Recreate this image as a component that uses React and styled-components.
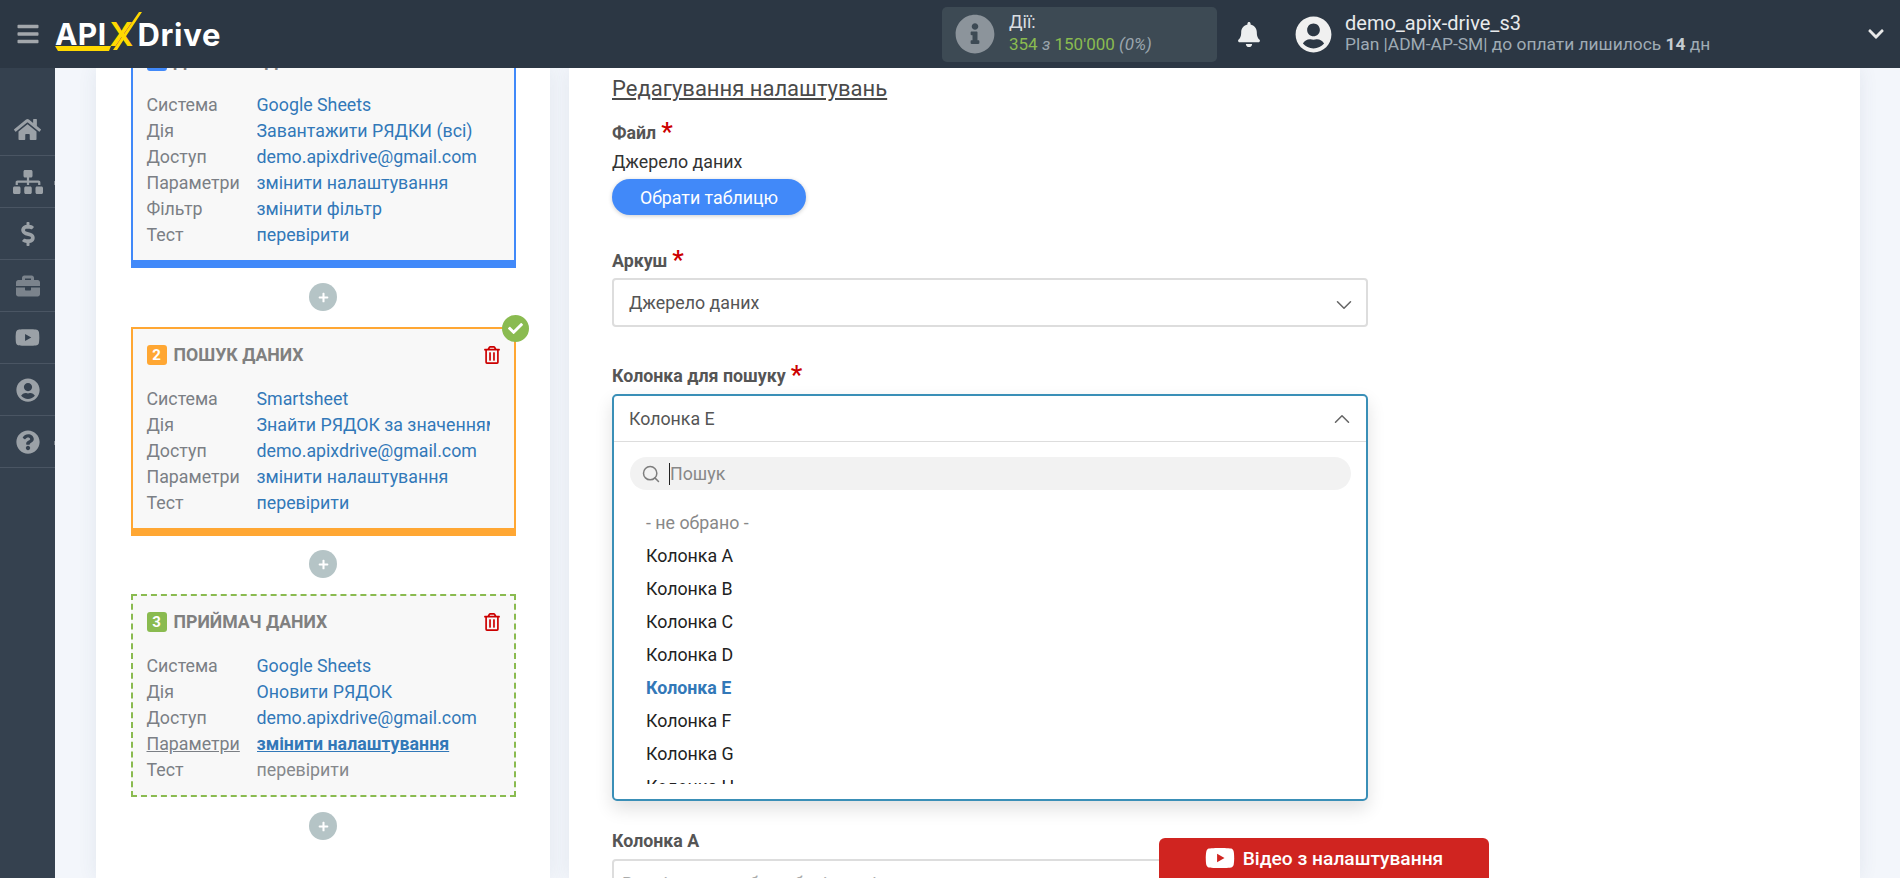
import React from "react";
import styled, { createGlobalStyle } from "styled-components";
import { FaHome, FaSitemap, FaDollarSign, FaBriefcase, FaYoutube, FaUserCircle, FaQuestionCircle, FaInfoCircle, FaBell, FaChevronDown, FaRegTrashAlt, FaCheck, FaPlus, FaBars } from "react-icons/fa";
import { ChevronDown, ChevronUp, Search } from "lucide-react";

const Global = createGlobalStyle`
  html, body { margin: 0; padding: 0; height: 100%; overflow: hidden; }
  body { font-family: Roboto, "Liberation Sans", sans-serif; font-size: 17.8px; color: #333; }
  * { box-sizing: border-box; }
`;

const Page = styled.div`position: relative; height: 100vh; display: flex; flex-direction: column; overflow: hidden;`;
const Header = styled.header`height: 68px; flex: none; background: #2c3744; display: flex; align-items: center;`;
const Burger = styled.div`width: 55px; display: flex; justify-content: center; color: #a3a7ac; font-size: 24px; svg { display: block; }`;
const Logo = styled.div`position: relative; display: flex; align-items: center; width: 200px; height: 68px; font-family: Inter, sans-serif; font-weight: 700; color: #fff; font-size: 30px; letter-spacing: 0.4px; line-height: 1;`;
const LogoX = styled.span`color: #ffd800; font-size: 33px; font-weight: 600; margin: 0 0 0 3px; width: 28px;`;
const LogoDrive = styled.span`font-size: 31px; letter-spacing: 0.7px;`;
const LogoMark = styled.svg`position: absolute; left: 0; top: 0; width: 170px; height: 68px; overflow: visible;`;
const Stats = styled.div`margin-left: 687px; width: 275px; height: 55px; background: #3d4a54; border-radius: 5px; display: flex; align-items: center; padding-left: 13px;`;
const StatIcon = styled.div`color: #8c949b; font-size: 40px; display: flex; svg { display: block; }`;
const StatText = styled.div`margin-left: 14px; font-size: 17px; line-height: 22px; margin-top: -2px;`;
const StatTitle = styled.div`color: #d9dde0; font-size: 18px;`;
const StatLine = styled.div`color: #8abb50; i { color: #9aa5ad; } span { color: #9aa5ad; font-style: italic; }`;
const Bell = styled.div`margin-left: 20px; width: 24px; color: #eceeef; font-size: 25px; display: flex; svg { display: block; }`;
const Avatar = styled.div`margin-left: 34px; color: #f0f0f0; font-size: 37px; display: flex; svg { display: block; }`;
const UserBlock = styled.div`margin-left: 13px; line-height: 21px;`;
const UserName = styled.div`color: #e8eaec; font-size: 20px;`;
const UserPlan = styled.div`color: #9fabb4; font-size: 17.4px; b { color: #c6ccd1; }`;
const Caret = styled.div`margin-left: auto; margin-right: 15px; color: #e8e8e8; font-size: 18px; display: flex;`;

const Body = styled.div`flex: 1; min-height: 0; display: flex; overflow: hidden;`;
const Sidebar = styled.nav`width: 55px; flex: none; background: #35414f; padding-top: 36px; position: relative;`;
const NavItem = styled.div`height: 52px; border-bottom: 1px solid #4a5563; display: flex; align-items: center; justify-content: center; color: ${p => p.$dim ? "#7b838c" : "#9ba1a7"}; font-size: ${p => p.$size || 26}px; position: relative;
  ${p => p.$tick && `&::after { content: ""; position: absolute; right: 0; top: 25px; width: 1px; height: 4px; background: #7b838c; }`}
`;
const Main = styled.main`flex: 1; background: #f3f6fb; display: flex; gap: 19px; padding-left: 41px; overflow: hidden;`;
const LeftPanel = styled.section`width: 454px; flex: none; background: #fff; box-shadow: 0 0 18px rgba(60,80,110,.09); display: flex; flex-direction: column; align-items: center;`;
const ScrolledTop = styled.div`margin-top: -35px; display: flex; flex-direction: column; align-items: center;`;
const Card = styled.div`position: relative; width: 385px; background: #f8f8f8; border: 2px ${p => p.$dashed ? "dashed" : "solid"} ${p => p.$color}; border-bottom-width: ${p => p.$dashed ? 2 : 8}px; padding: 16px 14px 12px;`;
const CardHead = styled.div`display: flex; align-items: center; height: 20px; margin-bottom: 21px;`;
const Badge = styled.span`width: 20px; height: 20px; border-radius: 3px; background: ${p => p.$color}; color: #fff; font-weight: 700; font-size: 15px; display: flex; align-items: center; justify-content: center;`;
const CardTitle = styled.span`margin-left: 7px; font-weight: 700; color: #808080; font-size: 17.7px; white-space: nowrap;`;
const Trash = styled.span`margin-left: auto; margin-right: -1px; color: #cc0000; font-size: 18px; display: flex;`;
const Row = styled.div`display: flex; height: 26px; line-height: 26px;`;
const RowLabel = styled.span`width: 110px; flex: none; color: #7b7f85; text-decoration: ${p => p.$active ? "underline" : "none"};`;
const RowValue = styled.span`width: 233px; overflow: hidden; white-space: nowrap; color: ${p => p.$muted ? "#85888c" : "#3278b8"}; font-weight: ${p => p.$active ? 700 : 400}; text-decoration: ${p => p.$active ? "underline" : "none"};`;
const Check = styled.span`position: absolute; right: -15px; top: -14px; width: 27px; height: 27px; border-radius: 50%; background: #8abb50; color: #fff; display: flex; align-items: center; justify-content: center; font-size: 15px;`;
const AddBtn = styled.div`width: 28px; height: 28px; border-radius: 50%; background: #b5c4c6; color: #fff; font-size: 11px; display: flex; align-items: center; justify-content: center; margin: ${p => p.$top || 14}px 0 16px;`;

const RightPanel = styled.section`width: 1291px; flex: none; background: #fff; box-shadow: 0 0 18px rgba(60,80,110,.09); padding: 9px 0 0 43px;`;
const Heading = styled.h2`margin: 0; font-size: 22px; line-height: 24px; font-weight: 400; color: #4a4a4a; text-decoration: underline;`;
const Field = styled.div`margin-top: ${p => p.$top}px;`;
const Label = styled.div`height: 22px; line-height: 22px; font-weight: 700; color: #555; display: flex;`;
const Star = styled.span`color: #cc0000; font-size: 26px; line-height: 20px; margin-left: 5px; font-weight: 500;`;
const Plain = styled.div`height: 22px; line-height: 22px; margin-top: 7px; color: #333;`;
const Btn = styled.div`width: 194px; height: 36px; margin-top: 6px; border-radius: 18px; background: #4189f9; color: #fff; display: flex; align-items: center; justify-content: center; box-shadow: 0 1px 4px rgba(0,0,0,.2);`;
const Select = styled.div`width: 756px; height: 49px; margin-top: 6px; border: 2px solid #ddd; border-radius: 4px; display: flex; align-items: center; justify-content: space-between; padding: 0 9px 0 15px; color: #555; svg { color: #666; margin-top: 4px; }`;
const Dropdown = styled.div`width: 756px; height: 407px; margin-top: 7px; border: 2px solid #3a8fb7; border-radius: 5px; box-shadow: 0 8px 18px rgba(0,0,0,.12); background: #fff;`;
const DropHead = styled.div`height: 46px; border-bottom: 1px solid #ddd; display: flex; align-items: center; justify-content: space-between; padding: 0 11px 0 15px; color: #555; svg { color: #666; }`;
const SearchBox = styled.div`height: 33px; margin: 15px 15px 16px 16px; background: #f2f2f2; border-radius: 17px; display: flex; align-items: center; padding-left: 11px; color: #888; svg { color: #7d7d7d; }`;
const TextCaret = styled.span`width: 1px; height: 22px; background: #222; margin: 0 0 0 8px;`;
const List = styled.div`height: 278px; margin-right: 1px; overflow-y: scroll; padding-left: 32px;
  &::-webkit-scrollbar { width: 11px; }
  &::-webkit-scrollbar-track { background: #f6f6f6; }
  &::-webkit-scrollbar-thumb { background: #c9c9c9; border-radius: 5px; }
`;
const Item = styled.div`height: 33px; line-height: 33px; color: ${p => p.$sel ? "#3278b8" : p.$none ? "#888" : "#222"}; font-weight: ${p => p.$sel ? 700 : 400};`;
const TextInput = styled.div`width: 756px; height: 49px; margin-top: 7px; border: 2px solid #ddd; border-radius: 4px; padding-left: 8px; display: flex; align-items: center; color: #aaa;`;
const VideoBtn = styled.div`position: absolute; left: 1159px; bottom: 0; width: 330px; height: 40px; background: #d02420; border-radius: 6px 6px 0 0; color: #fff; font-weight: 500; font-size: 19.2px; display: flex; align-items: center; justify-content: center; gap: 8px; svg { font-size: 30px; }`;

const rows = {
  a: [["Система","Google Sheets"],["Дія","Завантажити РЯДКИ (всі)"],["Доступ","demo.apixdrive@gmail.com"],["Параметри","змінити налаштування"],["Фільтр","змінити фільтр"],["Тест","перевірити"]],
  b: [["Система","Smartsheet"],["Дія","Знайти РЯДОК за значенням"],["Доступ","demo.apixdrive@gmail.com"],["Параметри","змінити налаштування"],["Тест","перевірити"]],
  c: [["Система","Google Sheets"],["Дія","Оновити РЯДОК"],["Доступ","demo.apixdrive@gmail.com"],["Параметри","змінити налаштування",true],["Тест","перевірити",false,true]],
};
const letters = "ABCDEFGHIJKLMNOPQRSTUVWXYZ".split("");

function Block({ n, title, color, dashed, data, done }) {
  return (
    <Card $color={color} $dashed={dashed}>
      {done && <Check><FaCheck /></Check>}
      <CardHead>
        <Badge $color={color}>{n}</Badge>
        <CardTitle>{title}</CardTitle>
        {n > 1 && <Trash><FaRegTrashAlt /></Trash>}
      </CardHead>
      {data.map(([l, v, active, muted]) => (
        <Row key={l}>
          <RowLabel $active={active}>{l}</RowLabel>
          <RowValue $active={active} $muted={muted}>{v}</RowValue>
        </Row>
      ))}
    </Card>
  );
}

export default function App() {
  return (
    <Page>
      <Global />
      <Header>
        <Burger><FaBars /></Burger>
        <Logo>
          <span>API</span><LogoX>X</LogoX><LogoDrive>Drive</LogoDrive>
          <LogoMark viewBox="0 0 170 68">
            <path d="M0 46 L56 46 L54 51 L3 51 Z" fill="#ffd800" />
            <path d="M58 50 L84 12 L87 12 L62 50 Z" fill="#ffd800" />
          </LogoMark>
        </Logo>
        <Stats>
          <StatIcon><FaInfoCircle /></StatIcon>
          <StatText>
            <StatTitle>Дії:</StatTitle>
            <StatLine>354 <i>з</i> 150'000 <span>(0%)</span></StatLine>
          </StatText>
        </Stats>
        <Bell><FaBell /></Bell>
        <Avatar><FaUserCircle /></Avatar>
        <UserBlock>
          <UserName>demo_apix-drive_s3</UserName>
          <UserPlan>Plan |ADM-AP-SM| до оплати лишилось <b>14</b> дн</UserPlan>
        </UserBlock>
        <Caret><FaChevronDown /></Caret>
      </Header>
      <Body>
        <Sidebar>
          <NavItem $size={27}><FaHome /></NavItem>
          <NavItem $size={30} $tick><FaSitemap /></NavItem>
          <NavItem $size={24}><FaDollarSign /></NavItem>
          <NavItem $size={24} $dim><FaBriefcase /></NavItem>
          <NavItem $size={25}><FaYoutube /></NavItem>
          <NavItem $size={24}><FaUserCircle /></NavItem>
          <NavItem $size={24} $tick><FaQuestionCircle /></NavItem>
        </Sidebar>
        <Main>
          <LeftPanel>
            <ScrolledTop>
              <Block n={1} title="ДЖЕРЕЛО ДАНИХ" color="#4189f9" data={rows.a} />
              <AddBtn $top={15}><FaPlus /></AddBtn>
              <Block n={2} title="ПОШУК ДАНИХ" color="#ffa733" data={rows.b} done />
              <AddBtn><FaPlus /></AddBtn>
              <Block n={3} title="ПРИЙМАЧ ДАНИХ" color="#8abb50" dashed data={rows.c} />
              <AddBtn $top={15}><FaPlus /></AddBtn>
            </ScrolledTop>
          </LeftPanel>
          <RightPanel>
            <Heading>Редагування налаштувань</Heading>
            <Field $top={21}>
              <Label>Файл<Star>*</Star></Label>
              <Plain>Джерело даних</Plain>
              <Btn>Обрати таблицю</Btn>
            </Field>
            <Field $top={35}>
              <Label>Аркуш<Star>*</Star></Label>
              <Select>Джерело даних<ChevronDown size={26} strokeWidth={1.4} /></Select>
            </Field>
            <Field $top={38}>
              <Label>Колонка для пошуку<Star>*</Star></Label>
              <Dropdown>
                <DropHead>Колонка E<ChevronUp size={26} strokeWidth={1.4} /></DropHead>
                <SearchBox><Search size={20} strokeWidth={1.8} /><TextCaret />Пошук</SearchBox>
                <List>
                  <Item $none>- не обрано -</Item>
                  {letters.map(l => <Item key={l} $sel={l === "E"}>Колонка {l}</Item>)}
                </List>
              </Dropdown>
            </Field>
            <Field $top={29}>
              <Label>Колонка A</Label>
              <TextInput>Введіть текст або виберіть змінну</TextInput>
            </Field>
          </RightPanel>
        </Main>
      </Body>
      <VideoBtn><FaYoutube />Відео з налаштування</VideoBtn>
    </Page>
  );
}
